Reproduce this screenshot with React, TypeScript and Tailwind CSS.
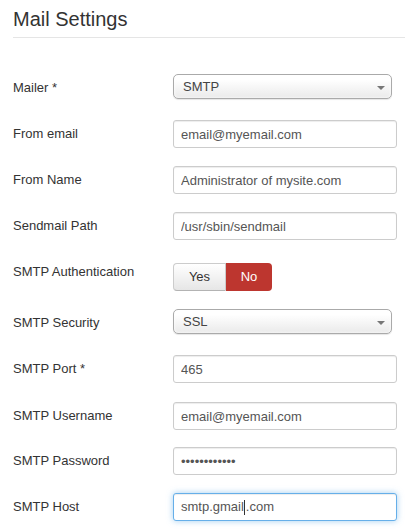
import React from "react";

const FONT = { fontFamily: '"Liberation Sans", Arial, sans-serif' };

function Label({ children, pt = "pt-[5px]" }: { children: React.ReactNode; pt?: string }) {
  return <div className={`w-[160px] shrink-0 text-[13px] leading-[18px] text-[#333] ${pt}`}>{children}</div>;
}

function TextField({ value }: { value: string }) {
  return (
    <input
      readOnly
      value={value}
      className="h-[28px] w-[224px] rounded-[3px] border border-[#ccc] bg-white px-[7px] text-[13px] text-[#555] shadow-[inset_0_1px_1px_rgba(0,0,0,0.075)] outline-none"
      style={FONT}
    />
  );
}

function Select({ value }: { value: string }) {
  return (
    <div className="relative flex h-[25px] w-[219px] items-center rounded-[5px] border border-[#aaa] bg-gradient-to-b from-white from-20% to-[#eaeaea] pl-[9px] text-[13px] text-[#444] shadow-[inset_0_0_3px_#fff,0_1px_1px_rgba(0,0,0,0.1)]">
      {value}
      <span className="absolute right-[6px] top-[11px] h-0 w-0 border-x-[4px] border-t-[4px] border-x-transparent border-t-[#777]" />
    </div>
  );
}

const ROWS: { label: string; kind: "input" | "select"; value: string; h: string }[] = [
  { label: "From email", kind: "input", value: "email@myemail.com", h: "h-[46px]" },
  { label: "From Name", kind: "input", value: "Administrator of mysite.com", h: "h-[46px]" },
  { label: "Sendmail Path", kind: "input", value: "/usr/sbin/sendmail", h: "h-[51px]" },
];

export default function App() {
  return (
    <div className="min-h-[532px] w-[405px] bg-white pl-[13px]" style={FONT}>
      <h3 className="border-b border-[#e5e5e5] pb-[6px] pt-[7px] text-[20px] font-normal leading-[24px] text-[#333]">
        Mail Settings
      </h3>

      <div className="pt-[36px]">
        <div className="flex h-[46px]">
          <Label>Mailer *</Label>
          <Select value="SMTP" />
        </div>

        {ROWS.map((r) => (
          <div key={r.label} className={`flex ${r.h}`}>
            <Label>{r.label}</Label>
            <TextField value={r.value} />
          </div>
        ))}

        <div className="flex h-[46px]">
          <Label pt="pt-0">SMTP Authentication</Label>
          <div className="flex h-[28px] text-[13px]">
            <div className="flex w-[53px] items-center justify-center rounded-l-[4px] border border-[#ccc] border-b-[#b3b3b3] bg-gradient-to-b from-white to-[#e6e6e6] text-[#333]">
              Yes
            </div>
            <div className="flex w-[46px] items-center justify-center rounded-r-[4px] bg-[#bd362f] text-white">
              No
            </div>
          </div>
        </div>

        <div className="flex h-[46px]">
          <Label>SMTP Security</Label>
          <Select value="SSL" />
        </div>

        <div className="flex h-[47px]">
          <Label>SMTP Port *</Label>
          <TextField value="465" />
        </div>

        <div className="flex h-[45px]">
          <Label>SMTP Username</Label>
          <TextField value="email@myemail.com" />
        </div>

        <div className="flex h-[46px]">
          <Label>SMTP Password</Label>
          <TextField value="••••••••••••" />
        </div>

        <div className="flex h-[39px]">
          <Label>SMTP Host</Label>
          <div className="flex h-[28px] w-[224px] items-center rounded-[3px] border border-[#66afe9] bg-white px-[7px] text-[13px] text-[#555] shadow-[inset_0_1px_1px_rgba(0,0,0,0.075),0_0_6px_rgba(102,175,233,0.6)]">
            smtp.gmail
            <span className="mx-[0.5px] inline-block h-[15px] w-px bg-[#333]" />
            .com
          </div>
        </div>
      </div>
    </div>
  );
}
